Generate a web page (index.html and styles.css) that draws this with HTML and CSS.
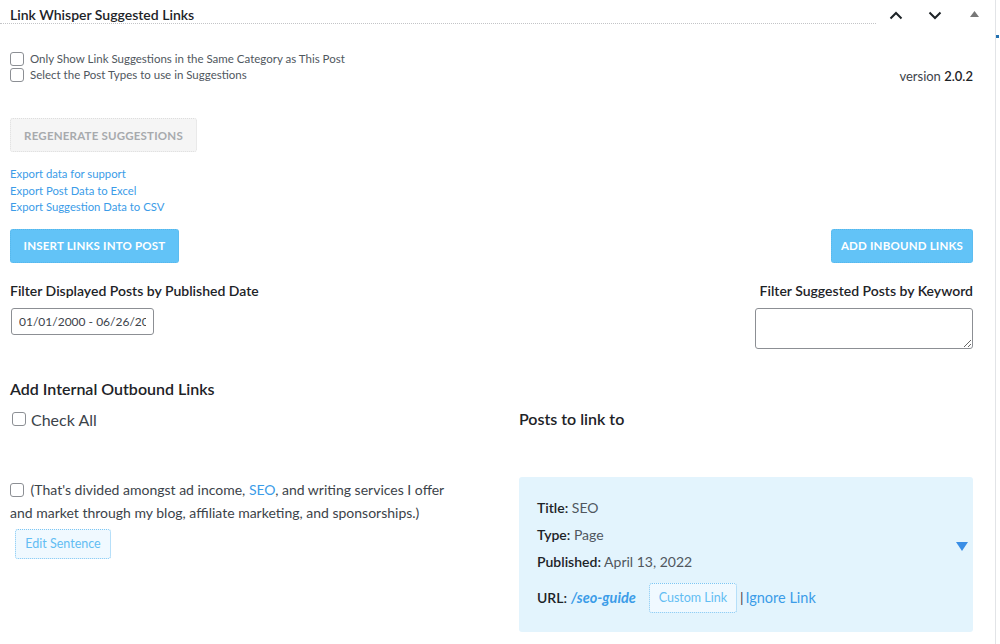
FILE: index.html
```html
<!DOCTYPE html>
<html lang="en">
  <head>
    <meta charset="UTF-8" />
    <meta name="viewport" content="width=device-width, initial-scale=1.0" />
    <title>Link Whisper Suggested Links</title>
    <link rel="stylesheet" href="styles.css">
  </head>

  <body>
    <div class="screen">
      <div class="postbox">
        <!-- 标题栏 -->
        <div class="postbox-head">
          <h2 class="postbox-title">Link Whisper Suggested Links</h2>
          <div class="handle-actions">
            <button class="handle" aria-label="Move up">
              <svg width="14" height="9" viewBox="0 0 14 9"><path d="M1.5 7.5 7 2l5.5 5.5" fill="none" stroke="#1d2327" stroke-width="2"/></svg>
            </button>
            <button class="handle" aria-label="Move down">
              <svg width="14" height="9" viewBox="0 0 14 9"><path d="M1.5 1.5 7 7l5.5-5.5" fill="none" stroke="#1d2327" stroke-width="2"/></svg>
            </button>
            <button class="handle" aria-label="Toggle panel">
              <svg width="9" height="6" viewBox="0 0 9 6"><path d="M4.5 0 9 6H0z" fill="#777"/></svg>
            </button>
          </div>
        </div>

        <div class="postbox-inside">
          <!-- 选项 -->
          <div class="options-row">
            <div class="options">
              <label class="opt"><input type="checkbox" /> Only Show Link Suggestions in the Same Category as This Post</label>
              <label class="opt"><input type="checkbox" /> Select the Post Types to use in Suggestions</label>
            </div>
            <div class="version">version <b>2.0.2</b></div>
          </div>

          <button class="btn btn-disabled">Regenerate Suggestions</button>

          <div class="exports">
            <a href="#">Export data for support</a>
            <a href="#">Export Post Data to Excel</a>
            <a href="#">Export Suggestion Data to CSV</a>
          </div>

          <div class="action-row">
            <button class="btn btn-blue">Insert Links into Post</button>
            <button class="btn btn-blue">Add Inbound Links</button>
          </div>

          <div class="filter-row">
            <div class="filter">
              <div class="filter-label">Filter Displayed Posts by Published Date</div>
              <input class="date-input" type="text" value="01/01/2000 - 06/26/2022" />
            </div>
            <div class="filter filter-right">
              <div class="filter-label">Filter Suggested Posts by Keyword</div>
              <textarea class="keyword"></textarea>
            </div>
          </div>

          <!-- 内链列表 -->
          <div class="links-grid">
            <div class="col">
              <h3 class="section-title">Add Internal Outbound Links</h3>
              <label class="check-all"><input type="checkbox" /> Check All</label>

              <div class="sentence">
                <p><input type="checkbox" /> (That's divided amongst ad income, <a href="#">SEO</a>, and writing services I offer and market through my blog, affiliate marketing, and sponsorships.)</p>
                <button class="btn-light">Edit Sentence</button>
              </div>
            </div>

            <div class="col">
              <h3 class="posts-title">Posts to link to</h3>
              <div class="suggestion">
                <div class="suggestion-info">
                  <div class="line"><b>Title:</b> SEO</div>
                  <div class="line"><b>Type:</b> Page</div>
                  <div class="line"><b>Published:</b> April 13, 2022</div>
                  <div class="line url-line">
                    <b>URL:</b> <a href="#" class="slug">/seo-guide</a>
                    <button class="btn-light">Custom Link</button><span class="sep">|</span><a href="#">Ignore Link</a>
                  </div>
                </div>
                <span class="more"></span>
              </div>
            </div>
          </div>
        </div>
      </div>

      <!-- 右侧边栏边缘 -->
      <div class="side-edge">
        <span class="side-mark"></span>
      </div>
    </div>
  </body>
</html>
```

FILE: styles.css
```css
* {
  margin: 0;
  padding: 0;
  box-sizing: border-box;
}

body {
  font-family: Lato, "Noto Sans", sans-serif;
  color: #2c3338;
  background: #fff;
}

.screen {
  display: flex;
  width: 1000px;
  height: 644px;
  overflow: hidden;
}

.postbox {
  width: 995px;
}

/* 标题栏 */
.postbox-head {
  display: flex;
  height: 32px;
}

.postbox-title {
  flex: 1;
  height: 24px;
  padding: 7px 10px 0;
  font-size: 14px;
  font-weight: 600;
  color: #1d2327;
  border-bottom: 1px dotted #c3c4c7;
  line-height: 16px;
}

.handle-actions {
  display: flex;
}

.handle {
  width: 39px;
  height: 32px;
  border: 0;
  background: none;
  display: flex;
  align-items: center;
  justify-content: center;
  padding-bottom: 2px;
}

.handle:last-child {
  width: 41px;
  padding-bottom: 4px;
}

.postbox-inside {
  padding: 20px 22px 0 10px;
}

/* 选项 */
.options-row {
  display: flex;
  justify-content: space-between;
  align-items: flex-end;
}

.options {
  display: flex;
  flex-direction: column;
  gap: 2px;
}

.opt {
  display: flex;
  align-items: center;
  gap: 6px;
  font-size: 11.5px;
  color: #50575e;
  line-height: 14px;
}

input[type="checkbox"] {
  appearance: none;
  width: 14px;
  height: 14px;
  border: 1px solid #8c8f94;
  border-radius: 3px;
  background: #fff;
  flex: none;
}

.version {
  font-size: 13px;
  color: #3c434a;
  margin-bottom: -2px;
}

.version b {
  font-weight: 600;
  color: #1d2327;
}

/* 按钮 */
.btn {
  display: block;
  height: 34px;
  padding: 0;
  border-radius: 3px;
  font-family: inherit;
  font-size: 11.5px;
  font-weight: 700;
  letter-spacing: 0.2px;
  text-transform: uppercase;
  white-space: nowrap;
}

.btn-disabled {
  margin-top: 36px;
  width: 187px;
  background: #f5f5f5;
  border: 1px dotted #ddd;
  color: #a7aaad;
}

.btn-blue {
  background: #62c3f7;
  border: 1px dotted #56b6ea;
  color: #fff;
}

.exports {
  display: flex;
  flex-direction: column;
  margin-top: 14px;
}

.exports a {
  font-size: 11.3px;
  line-height: 16.5px;
  color: #3b9ce8;
  text-decoration: none;
}

.action-row {
  display: flex;
  justify-content: space-between;
  margin-top: 13px;
}

.action-row .btn:first-child {
  width: 169px;
}

.action-row .btn:last-child {
  width: 142px;
}

/* 筛选 */
.filter-row {
  display: flex;
  justify-content: space-between;
  margin-top: 19px;
}

.filter {
  display: flex;
  flex-direction: column;
}

.filter-right {
  align-items: flex-end;
}

.filter-label {
  font-size: 14px;
  font-weight: 600;
  color: #1d2327;
  line-height: 17px;
}

.date-input {
  margin-top: 9px;
  margin-left: 1px;
  width: 143px;
  height: 27px;
  padding: 0 7px;
  border: 1px solid #8c8f94;
  border-radius: 3px;
  font-family: inherit;
  font-size: 12px;
  color: #3c434a;
}

.keyword {
  margin-top: 9px;
  width: 218px;
  height: 41px;
  border: 1px solid #8c8f94;
  border-radius: 3px;
}

/* 内链 */
.links-grid {
  display: flex;
  margin-top: 30px;
}

.col {
  flex: 1;
}

.col:last-child {
  flex: none;
  width: 454px;
}

.section-title {
  font-size: 16px;
  font-weight: 600;
  color: #1d2327;
  line-height: 20px;
}

.check-all {
  display: flex;
  align-items: center;
  gap: 5px;
  margin-top: 11px;
  margin-left: 2px;
  font-size: 16px;
  color: #3c434a;
}

.sentence {
  margin-top: 49px;
}

.sentence p {
  font-size: 14px;
  line-height: 23px;
  color: #3c434a;
  width: 450px;
}

.sentence p input {
  vertical-align: -2px;
  margin-right: 3px;
}

.sentence a,
.url-line a {
  color: #3b9ce8;
  text-decoration: none;
}

.btn-light {
  height: 30px;
  padding: 0;
  border: 1px dotted #7cc6f3;
  border-radius: 3px;
  background: #f0f9ff;
  color: #62bdf3;
  font-family: inherit;
  font-size: 12.5px;
  white-space: nowrap;
}

.sentence .btn-light {
  margin: 5px 0 0 5px;
  width: 96px;
  height: 30px;
}

.posts-title {
  margin-top: 30px;
  font-size: 16px;
  font-weight: 600;
  color: #1d2327;
  line-height: 20px;
}

.suggestion {
  display: flex;
  align-items: center;
  margin-top: 48px;
  padding: 22px 5px 19px 18px;
  background: #e3f4fd;
  border-radius: 3px;
}

.suggestion-info {
  flex: 1;
  display: flex;
  flex-direction: column;
  gap: 10px;
  font-size: 14px;
  color: #50575e;
}

.line {
  line-height: 17px;
}

.line b {
  font-weight: 600;
  color: #1d2327;
}

.url-line {
  display: flex;
  align-items: center;
  margin-top: 3px;
}

.url-line b {
  margin-right: 4px;
}

.slug {
  font-weight: 700;
  font-style: italic;
  font-size: 14.5px;
  margin-right: 13px;
}

.url-line .btn-light {
  width: 88px;
}

.sep {
  margin: 0 2px 0 3px;
  color: #3c434a;
}

.url-line a:last-child {
  font-size: 14.5px;
}

.more {
  width: 0;
  height: 0;
  border-left: 6px solid transparent;
  border-right: 6px solid transparent;
  border-top: 9px solid #3a8ee6;
  margin: 0 0 18px;
}

/* 右侧边栏边缘 */
.side-edge {
  flex: 1;
  border-left: 1px solid #e2e4e7;
  position: relative;
}

.side-mark {
  position: absolute;
  top: 35px;
  left: 0;
  width: 3px;
  height: 3px;
  background: #2271b1;
}
```
